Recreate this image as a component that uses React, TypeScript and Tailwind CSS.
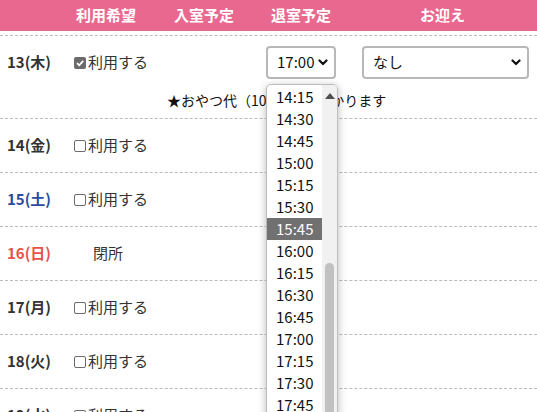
import React from 'react';

interface Day {
  label: string;
  color: string;
  closed?: boolean;
  checked?: boolean;
}

const days: Day[] = [
  { label: '14(金)', color: 'text-[#333]' },
  { label: '15(土)', color: 'text-[#2d4b9b]' },
  { label: '16(日)', color: 'text-[#e8514b]', closed: true },
  { label: '17(月)', color: 'text-[#333]' },
  { label: '18(火)', color: 'text-[#333]' },
  { label: '19(水)', color: 'text-[#333]' },
];

const times = [
  '14:15', '14:30', '14:45', '15:00', '15:15', '15:30', '15:45',
  '16:00', '16:15', '16:30', '16:45', '17:00', '17:15', '17:30', '17:45', '18:00',
];

const cols = 'grid grid-cols-[58px_96px_100px_94px_189px]';

function Chevron() {
  return (
    <svg width="10" height="7" viewBox="0 0 10 7" className="shrink-0">
      <path d="M1.5 1.5 L5 5 L8.5 1.5" fill="none" stroke="#111" strokeWidth="2.2" strokeLinecap="round" strokeLinejoin="round" />
    </svg>
  );
}

function Check({ checked }: { checked?: boolean }) {
  if (checked) {
    return (
      <span className="w-[12px] h-[12px] rounded-[2px] bg-[#6b6b6b] flex items-center justify-center">
        <svg width="10" height="10" viewBox="0 0 10 10">
          <path d="M2 5.2 L4.2 7.3 L8.2 2.8" fill="none" stroke="#fff" strokeWidth="1.8" />
        </svg>
      </span>
    );
  }
  return <span className="w-[12px] h-[12px] rounded-[2px] border border-[#6b6b6b] bg-white" />;
}

function UseBox({ checked }: { checked?: boolean }) {
  return (
    <div className="flex items-center gap-[2px] pl-[16px]">
      <Check checked={checked} />
      <span>利用する</span>
    </div>
  );
}

export default function App() {
  return (
    <div className="relative w-[537px] h-[412px] overflow-hidden bg-white text-[#333] text-[15px] font-['Noto_Sans_CJK_JP','Noto_Sans',sans-serif]">
      {/* header */}
      <div className={`${cols} h-[31px] bg-[#e9688f] text-white font-bold items-center text-center`}>
        <div />
        <div>利用希望</div>
        <div>入室予定</div>
        <div>退室予定</div>
        <div>お迎え</div>
      </div>

      {/* row 13 */}
      <div className="mt-[4px] border-t border-dashed border-[#bbb] h-[83px]">
        <div className={`${cols} h-[53px] items-center`}>
          <div className="pl-[7px] font-bold">13(木)</div>
          <UseBox checked />
          <div />
          <div className="flex justify-center">
            <div className="w-[70px] h-[33px] border-2 border-[#b8b8b8] rounded-[4px] flex items-center justify-between pl-[9px] pr-[6px]">
              <span className="text-[#111]">17:00</span>
              <Chevron />
            </div>
          </div>
          <div className="pl-[14px] pr-[8px]">
            <div className="h-[33px] border-2 border-[#b8b8b8] rounded-[4px] flex items-center justify-between pl-[9px] pr-[6px]">
              <span className="text-[#111]">なし</span>
              <Chevron />
            </div>
          </div>
        </div>
        <div className="h-[22px] flex items-center pl-[167px] text-[14px] text-[#111]">
          ★おやつ代（100円）がかかります
        </div>
      </div>

      {days.map((d) => (
        <div key={d.label} className={`${cols} h-[54px] border-t border-dashed border-[#bbb] items-center`}>
          <div className={`pl-[7px] font-bold ${d.color}`}>{d.label}</div>
          {d.closed ? <div className="pl-[35px]">閉所</div> : <UseBox checked={d.checked} />}
          <div />
          <div />
          <div />
        </div>
      ))}

      {/* open time dropdown */}
      <div className="absolute left-[266px] top-[84px] w-[72px] h-[360px] bg-white border border-[#bdbdbd] rounded-t-[5px] shadow-[0_2px_9px_rgba(0,0,0,0.28)] flex overflow-hidden">
        <div className="w-[55px] pt-[1px]">
          {times.map((t) => (
            <div
              key={t}
              className={`h-[22px] flex items-center pl-[9px] ${t === '15:45' ? 'bg-[#717171] text-white' : 'text-[#111]'}`}
            >
              {t}
            </div>
          ))}
        </div>
        <div className="w-[15px] bg-[#f1f1f1] relative">
          <svg width="10" height="6" viewBox="0 0 10 6" className="absolute left-[3px] top-[8px]">
            <path d="M5 0 L10 6 L0 6 Z" fill="#505050" />
          </svg>
          <div className="absolute left-[3px] top-[178px] w-[9px] h-[200px] rounded-[5px] bg-[#c1c1c1]" />
        </div>
      </div>
    </div>
  );
}
